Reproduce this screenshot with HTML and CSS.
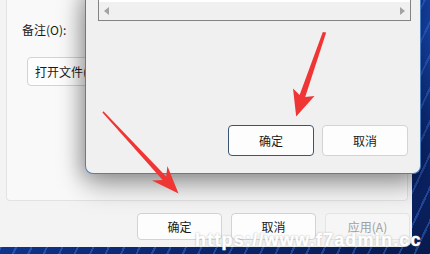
FILE: index.html
```html
<!DOCTYPE html>
<html lang="zh-CN">
<head>
<meta charset="utf-8">
<link rel="stylesheet" href="styles.css">
</head>
<body>
<div class="desktop">
  <div class="window-back">
    <div class="panel">
      <div class="label">备注(O):</div>
      <div class="btn btn-open">打开文件(B)...</div>
    </div>
    <div class="footer">
      <div class="btn">确定</div>
      <div class="btn">取消</div>
      <div class="btn btn-disabled">应用(A)</div>
    </div>
  </div>

  <div class="dialog">
    <div class="listbox">
      <div class="list-body"></div>
      <div class="hscroll">
        <span class="arrow arrow-left"></span>
        <span class="arrow arrow-right"></span>
      </div>
    </div>
    <div class="dialog-buttons">
      <div class="btn btn-default">确定</div>
      <div class="btn">取消</div>
    </div>
  </div>

  <svg class="arrows" width="430" height="254" viewBox="0 0 430 254">
    <polygon fill="#f03535" points="103.5,111.3 166.2,176.6 167.4,166.0 178.5,193.5 152.0,180.6 162.6,180.0 102.4,112.6"/>
    <polygon fill="#f03535" points="322.8,32 299.6,95.1 293.0,88.6 296.2,116.5 314.5,96.0 305.2,97.1 326.2,32.6"/>
  </svg>

  <div class="watermark">https://www.f7admin.cc</div>
</div>
</body>
</html>
```

FILE: styles.css
```css
html, body {
  margin: 0;
  padding: 0;
}

body {
  width: 430px;
  height: 254px;
  overflow: hidden;
  font-family: "Noto Sans CJK SC", "Noto Sans", sans-serif;
  font-size: 12px;
  color: #1a1a1a;
}

.desktop {
  position: relative;
  width: 430px;
  height: 254px;
  overflow: hidden;
  background:
    repeating-linear-gradient(115deg, rgba(80, 140, 255, 0) 0 6px, rgba(80, 140, 255, 0.35) 6px 8px, rgba(80, 140, 255, 0) 8px 14px),
    linear-gradient(160deg, #0b1d57 0%, #1646b0 45%, #0c2a78 70%, #081a4c 100%);
}

.window-back {
  width: 412px;
  height: 247px;
  background: #f3f3f3;
  border-radius: 0 0 8px 0;
  display: flex;
  flex-direction: column;
}

.panel {
  box-sizing: border-box;
  height: 201px;
  margin: 0 4px 0 6px;
  padding: 22px 0 0 15px;
  background: #f9f9f9;
  border: 1px solid #e2e2e2;
  border-top: none;
  border-radius: 0 0 4px 4px;
}

.label {
  line-height: 16px;
  height: 16px;
}

.btn {
  box-sizing: border-box;
  display: flex;
  align-items: center;
  justify-content: center;
  width: 85px;
  height: 27px;
  background: #fdfdfd;
  border: 1px solid #d3d3d3;
  border-radius: 4px;
  white-space: nowrap;
  line-height: 1;
}

.btn-open {
  width: 110px;
  height: 29px;
  margin: 19px 0 0 5px;
  justify-content: flex-start;
  padding-left: 7px;
}

.footer {
  display: flex;
  justify-content: flex-end;
  gap: 9px;
  padding: 12px 2px 0 0;
}

.btn-disabled {
  color: #a0a0a0;
  background: #f6f6f6;
  border-color: #e4e4e4;
}

.dialog {
  position: absolute;
  left: 85px;
  top: -12px;
  box-sizing: border-box;
  width: 336px;
  height: 186px;
  padding: 0 9px 0 12px;
  background: #f0f0f0;
  border: 1px solid #4a7fc2;
  border-top: none;
  border-radius: 0 0 8px 8px;
  box-shadow: 0 10px 28px rgba(0, 0, 0, 0.4), -6px 2px 16px rgba(0, 0, 0, 0.14);
  display: flex;
  flex-direction: column;
}

.listbox {
  box-sizing: border-box;
  height: 33px;
  border: 1px solid #838383;
  border-top: none;
  background: #ffffff;
  display: flex;
  flex-direction: column;
}

.list-body {
  height: 14px;
  background: #ffffff;
}

.hscroll {
  flex: 1;
  background: #f0f0f0;
  display: flex;
  align-items: center;
  justify-content: space-between;
  padding: 0 5px;
}

.arrow {
  width: 0;
  height: 0;
  border-top: 4px solid transparent;
  border-bottom: 4px solid transparent;
}

.arrow-left {
  border-right: 5px solid #a3a3a3;
}

.arrow-right {
  border-left: 5px solid #a3a3a3;
}

.dialog-buttons {
  display: flex;
  justify-content: flex-end;
  gap: 8px;
  margin: 104px 3px 0 0;
}

.dialog-buttons .btn {
  width: 86px;
  height: 31px;
}

.dialog-buttons .btn-default {
  border: 1px solid #3a5572;
  box-shadow: inset 0 0 0 1px #fdfdfd;
}

.arrows {
  position: absolute;
  left: 0;
  top: 0;
}

.watermark {
  position: absolute;
  left: 195px;
  top: 230px;
  font-family: "Liberation Sans", Arial, sans-serif;
  font-weight: bold;
  font-size: 18px;
  line-height: 20px;
  letter-spacing: 1.2px;
  color: #ffffff;
  -webkit-text-stroke: 0.5px #ffffff;
  text-shadow: 0 0 2px rgba(90, 90, 90, 0.7);
  white-space: nowrap;
}
```
